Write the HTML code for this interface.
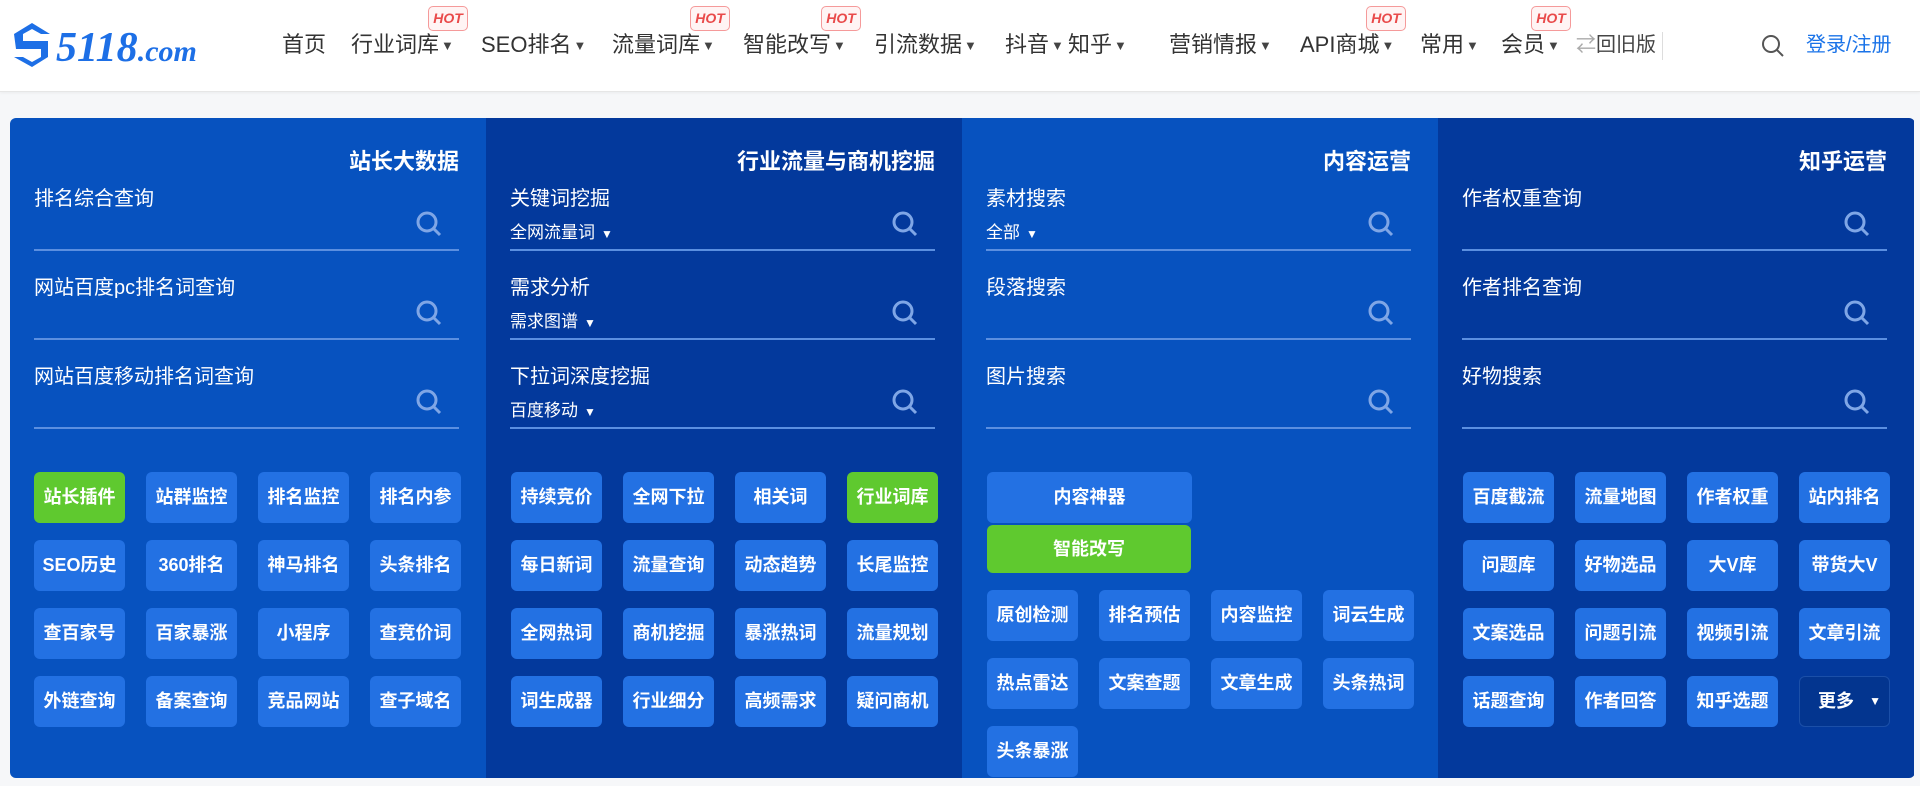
<!DOCTYPE html>
<html><head><meta charset="utf-8"><style>
*{margin:0;padding:0;box-sizing:border-box}
body{width:1920px;height:786px;background:#f6f7f9;font-family:"Liberation Sans","Noto Sans CJK SC",sans-serif;position:relative;overflow:hidden}
.hdr{position:absolute;left:0;top:0;width:1920px;height:92px;background:#fff;border-bottom:1px solid #e6e6e6;box-shadow:0 1px 3px rgba(0,0,0,.05)}
.nav{position:absolute;top:30px;font-size:22px;color:#333;line-height:30px;white-space:nowrap}
.nav i{font-style:normal;font-size:13px;color:#444;margin-left:2px;position:relative;top:-2px}
.hot{position:absolute;top:6px;width:40px;height:25px;border:1px solid #f59a9a;border-radius:5px;color:#e94a4a;font-size:14px;font-style:italic;font-weight:bold;text-align:center;line-height:23px;background:#fff4f4}
.panel{position:absolute;left:10px;top:118px;width:1905px;height:660px;border-radius:6px;overflow:hidden}
.col{position:absolute;top:0;height:660px;width:476px}
.c1,.c3{background:#0752bf}.c2,.c4{background:#03399c}
.title{position:absolute;right:27px;top:26px;color:#fff;font-size:22px;font-weight:bold}
.fld{position:absolute;left:24px;width:425px;height:69px;border-bottom:2px solid #5b8fe0}
.fld .lb{position:absolute;left:0;top:0;color:#fff;font-size:20px}
.fld .sub{position:absolute;left:0;top:36px;color:#fff;font-size:17px}
.fld .sub b{font-size:12px;margin-left:6px;font-weight:normal}
.fld svg{position:absolute;right:16px;top:28px}
.btn{position:absolute;width:91px;height:51px;background:#2371e3;border-radius:6px;color:#fff;font-size:18px;font-weight:bold;text-align:center;line-height:51px;white-space:nowrap}
.g{background:#5fc92f}
</style></head><body>
<div class="hdr">
<svg style="position:absolute;left:10px;top:20px" width="240" height="52" viewBox="0 0 240 52">
<path d="M4 14 L22 3 L40 14 L31 14 L22 9 L13 14 L13 21 L38 21 L38 37 L22 47 L4 37 L13 37 L22 42 L31 37 L31 29 L6 29 Z" fill="#1d6fe6"/>
<text x="46" y="41" font-family="Liberation Serif,serif" font-style="italic" font-weight="bold" font-size="42" fill="#1d6fe6">5118<tspan font-size="30">.com</tspan></text>
</svg>
<span class="nav" style="left:282px">首页</span>
<span class="nav" style="left:351px">行业词库<i>▼</i></span>
<span class="nav" style="left:481px">SEO排名<i>▼</i></span>
<span class="nav" style="left:612px">流量词库<i>▼</i></span>
<span class="nav" style="left:743px">智能改写<i>▼</i></span>
<span class="nav" style="left:874px">引流数据<i>▼</i></span>
<span class="nav" style="left:1005px">抖音<i>▼</i></span>
<span class="nav" style="left:1068px">知乎<i>▼</i></span>
<span class="nav" style="left:1169px">营销情报<i>▼</i></span>
<span class="nav" style="left:1300px">API商城<i>▼</i></span>
<span class="nav" style="left:1420px">常用<i>▼</i></span>
<span class="nav" style="left:1501px">会员<i>▼</i></span>
<span class="nav" style="left:1576px;font-size:20px;color:#444"><span style="color:#aaa">⇄</span>回旧版</span>
<div style="position:absolute;left:1662px;top:32px;width:1px;height:28px;background:#ddd"></div>
<div class="hot" style="left:428px">HOT</div>
<div class="hot" style="left:690px">HOT</div>
<div class="hot" style="left:821px">HOT</div>
<div class="hot" style="left:1366px">HOT</div>
<div class="hot" style="left:1531px">HOT</div>
<svg style="position:absolute;left:1761px;top:34px" width="24" height="24" viewBox="0 0 24 24"><circle cx="10" cy="10" r="8" fill="none" stroke="#555" stroke-width="2"/><path d="M16 16 L22 22" stroke="#555" stroke-width="2"/></svg>
<span class="nav" style="left:1806px;color:#1a73e8;font-size:20px">登录/注册</span>
</div>

<div class="panel">
<div class="col c1" style="left:0">
<div class="title">站长大数据</div>
<div class="fld" style="top:64px"><div class="lb">排名综合查询</div><svg width="28" height="28" viewBox="0 0 28 28"><circle cx="12" cy="12" r="9" fill="none" stroke="#7fa6e6" stroke-width="3"/><path d="M19 19 L25 25" stroke="#7fa6e6" stroke-width="3"/></svg></div>
<div class="fld" style="top:153px"><div class="lb">网站百度pc排名词查询</div><svg width="28" height="28" viewBox="0 0 28 28"><circle cx="12" cy="12" r="9" fill="none" stroke="#7fa6e6" stroke-width="3"/><path d="M19 19 L25 25" stroke="#7fa6e6" stroke-width="3"/></svg></div>
<div class="fld" style="top:242px"><div class="lb">网站百度移动排名词查询</div><svg width="28" height="28" viewBox="0 0 28 28"><circle cx="12" cy="12" r="9" fill="none" stroke="#7fa6e6" stroke-width="3"/><path d="M19 19 L25 25" stroke="#7fa6e6" stroke-width="3"/></svg></div>
<div class="btn g" style="left:24px;top:354px">站长插件</div><div class="btn" style="left:136px;top:354px">站群监控</div><div class="btn" style="left:248px;top:354px">排名监控</div><div class="btn" style="left:360px;top:354px">排名内参</div>
<div class="btn" style="left:24px;top:422px">SEO历史</div><div class="btn" style="left:136px;top:422px">360排名</div><div class="btn" style="left:248px;top:422px">神马排名</div><div class="btn" style="left:360px;top:422px">头条排名</div>
<div class="btn" style="left:24px;top:490px">查百家号</div><div class="btn" style="left:136px;top:490px">百家暴涨</div><div class="btn" style="left:248px;top:490px">小程序</div><div class="btn" style="left:360px;top:490px">查竞价词</div>
<div class="btn" style="left:24px;top:558px">外链查询</div><div class="btn" style="left:136px;top:558px">备案查询</div><div class="btn" style="left:248px;top:558px">竞品网站</div><div class="btn" style="left:360px;top:558px">查子域名</div>
</div>
<div class="col c2" style="left:476px">
<div class="title">行业流量与商机挖掘</div>
<div class="fld" style="top:64px"><div class="lb">关键词挖掘</div><div class="sub">全网流量词<b>▼</b></div><svg width="28" height="28" viewBox="0 0 28 28"><circle cx="12" cy="12" r="9" fill="none" stroke="#7fa6e6" stroke-width="3"/><path d="M19 19 L25 25" stroke="#7fa6e6" stroke-width="3"/></svg></div>
<div class="fld" style="top:153px"><div class="lb">需求分析</div><div class="sub">需求图谱<b>▼</b></div><svg width="28" height="28" viewBox="0 0 28 28"><circle cx="12" cy="12" r="9" fill="none" stroke="#7fa6e6" stroke-width="3"/><path d="M19 19 L25 25" stroke="#7fa6e6" stroke-width="3"/></svg></div>
<div class="fld" style="top:242px"><div class="lb">下拉词深度挖掘</div><div class="sub">百度移动<b>▼</b></div><svg width="28" height="28" viewBox="0 0 28 28"><circle cx="12" cy="12" r="9" fill="none" stroke="#7fa6e6" stroke-width="3"/><path d="M19 19 L25 25" stroke="#7fa6e6" stroke-width="3"/></svg></div>
<div class="btn" style="left:25px;top:354px">持续竞价</div><div class="btn" style="left:137px;top:354px">全网下拉</div><div class="btn" style="left:249px;top:354px">相关词</div><div class="btn g" style="left:361px;top:354px">行业词库</div>
<div class="btn" style="left:25px;top:422px">每日新词</div><div class="btn" style="left:137px;top:422px">流量查询</div><div class="btn" style="left:249px;top:422px">动态趋势</div><div class="btn" style="left:361px;top:422px">长尾监控</div>
<div class="btn" style="left:25px;top:490px">全网热词</div><div class="btn" style="left:137px;top:490px">商机挖掘</div><div class="btn" style="left:249px;top:490px">暴涨热词</div><div class="btn" style="left:361px;top:490px">流量规划</div>
<div class="btn" style="left:25px;top:558px">词生成器</div><div class="btn" style="left:137px;top:558px">行业细分</div><div class="btn" style="left:249px;top:558px">高频需求</div><div class="btn" style="left:361px;top:558px">疑问商机</div>
</div>
<div class="col c3" style="left:952px">
<div class="title">内容运营</div>
<div class="fld" style="top:64px"><div class="lb">素材搜索</div><div class="sub">全部<b>▼</b></div><svg width="28" height="28" viewBox="0 0 28 28"><circle cx="12" cy="12" r="9" fill="none" stroke="#7fa6e6" stroke-width="3"/><path d="M19 19 L25 25" stroke="#7fa6e6" stroke-width="3"/></svg></div>
<div class="fld" style="top:153px"><div class="lb">段落搜索</div><svg width="28" height="28" viewBox="0 0 28 28"><circle cx="12" cy="12" r="9" fill="none" stroke="#7fa6e6" stroke-width="3"/><path d="M19 19 L25 25" stroke="#7fa6e6" stroke-width="3"/></svg></div>
<div class="fld" style="top:242px"><div class="lb">图片搜索</div><svg width="28" height="28" viewBox="0 0 28 28"><circle cx="12" cy="12" r="9" fill="none" stroke="#7fa6e6" stroke-width="3"/><path d="M19 19 L25 25" stroke="#7fa6e6" stroke-width="3"/></svg></div>
<div class="btn" style="left:25px;top:354px;width:205px">内容神器</div>
<div class="btn g" style="left:25px;top:407px;width:204px;height:48px;line-height:48px">智能改写</div>
<div class="btn" style="left:25px;top:472px">原创检测</div><div class="btn" style="left:137px;top:472px">排名预估</div><div class="btn" style="left:249px;top:472px">内容监控</div><div class="btn" style="left:361px;top:472px">词云生成</div>
<div class="btn" style="left:25px;top:540px">热点雷达</div><div class="btn" style="left:137px;top:540px">文案查题</div><div class="btn" style="left:249px;top:540px">文章生成</div><div class="btn" style="left:361px;top:540px">头条热词</div>
<div class="btn" style="left:25px;top:608px">头条暴涨</div>
</div>
<div class="col c4" style="left:1428px">
<div class="title">知乎运营</div>
<div class="fld" style="top:64px"><div class="lb">作者权重查询</div><svg width="28" height="28" viewBox="0 0 28 28"><circle cx="12" cy="12" r="9" fill="none" stroke="#7fa6e6" stroke-width="3"/><path d="M19 19 L25 25" stroke="#7fa6e6" stroke-width="3"/></svg></div>
<div class="fld" style="top:153px"><div class="lb">作者排名查询</div><svg width="28" height="28" viewBox="0 0 28 28"><circle cx="12" cy="12" r="9" fill="none" stroke="#7fa6e6" stroke-width="3"/><path d="M19 19 L25 25" stroke="#7fa6e6" stroke-width="3"/></svg></div>
<div class="fld" style="top:242px"><div class="lb">好物搜索</div><svg width="28" height="28" viewBox="0 0 28 28"><circle cx="12" cy="12" r="9" fill="none" stroke="#7fa6e6" stroke-width="3"/><path d="M19 19 L25 25" stroke="#7fa6e6" stroke-width="3"/></svg></div>
<div class="btn" style="left:25px;top:354px">百度截流</div><div class="btn" style="left:137px;top:354px">流量地图</div><div class="btn" style="left:249px;top:354px">作者权重</div><div class="btn" style="left:361px;top:354px">站内排名</div>
<div class="btn" style="left:25px;top:422px">问题库</div><div class="btn" style="left:137px;top:422px">好物选品</div><div class="btn" style="left:249px;top:422px">大V库</div><div class="btn" style="left:361px;top:422px">带货大V</div>
<div class="btn" style="left:25px;top:490px">文案选品</div><div class="btn" style="left:137px;top:490px">问题引流</div><div class="btn" style="left:249px;top:490px">视频引流</div><div class="btn" style="left:361px;top:490px">文章引流</div>
<div class="btn" style="left:25px;top:558px">话题查询</div><div class="btn" style="left:137px;top:558px">作者回答</div><div class="btn" style="left:249px;top:558px">知乎选题</div>
<div class="btn" style="left:361px;top:558px;background:#03358f;border:1px solid #1b4fa8;text-align:left;padding-left:18px;line-height:49px">更多<span style="position:absolute;right:8px;font-size:12px">▼</span></div>
</div>
</div>
</body></html>
